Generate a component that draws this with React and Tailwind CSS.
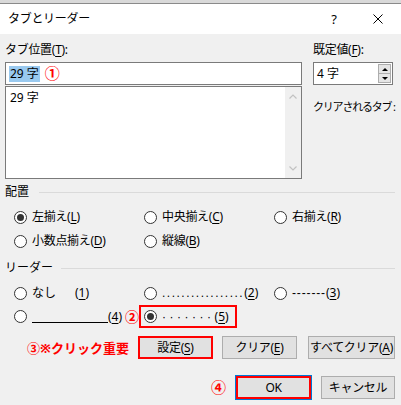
import { useState } from "react";

const font = "font-['Noto_Sans','Noto_Sans_CJK_JP',sans-serif]";

function Radio({ checked }) {
	return (
		<span className="flex h-[13px] w-[13px] shrink-0 items-center justify-center rounded-full border border-[#333] bg-white">
			{checked && <span className="h-[7px] w-[7px] rounded-full bg-[#333]" />}
		</span>
	);
}

function Key({ k }) {
	return (
		<>
			(<span className="underline underline-offset-2">{k}</span>)
		</>
	);
}

function Option({ label, k, checked }) {
	return (
		<div className="flex items-center gap-[5px]">
			<Radio checked={checked} />
			<span className="whitespace-nowrap tracking-[-0.3px]">
				{label}
				<Key k={k} />
			</span>
		</div>
	);
}

function Section({ title, lineStart }) {
	return (
		<div className="flex h-[16px] items-center pl-[5px] pr-[6px]">
			<span>{title}</span>
			<span className={`h-px flex-1 bg-[#dadada] ${lineStart}`} />
		</div>
	);
}

function Button({ children, className = "" }) {
	return (
		<button
			className={`flex h-[23px] items-center justify-center whitespace-nowrap border bg-[#e1e1e1] text-[12px] tracking-[-0.3px] ${className}`}
		>
			{children}
		</button>
	);
}

export default function App() {
	const [leader] = useState(5);

	return (
		<div
			className={`h-[405px] w-[401px] overflow-hidden bg-[#f0f0f0] text-[12px] leading-[16px] text-black ${font}`}
		>
			<div className="h-[4px] border-b border-[#8a8a8a] bg-[#d9d9d9]" />
			<div className="flex h-[30px] items-center bg-white pl-[8px]">
				<span className="flex-1 tracking-[-0.3px]">タブとリーダー</span>
				<span className="mr-[36px] text-[13px]">?</span>
				<svg viewBox="0 0 10 10" className="mr-[18px] h-[10px] w-[10px]" aria-hidden="true">
					<path d="M0.5 0.5L9.5 9.5M9.5 0.5L0.5 9.5" stroke="#000" strokeWidth="1" fill="none" />
				</svg>
			</div>

			<div className="flex pt-[8px]">
				<div className="ml-[5px] w-[297px]">
					<div className="tracking-[-0.3px]">
						タブ位置<Key k="T" />:
					</div>
					<div className="mt-[4px] flex h-[23px] items-center border border-[#7a7a7a] bg-white pl-[3px]">
						<span className="bg-[#99c9ef] px-[1px]">29 字</span>
						<span className="ml-[5px] text-[15px] font-bold leading-none text-[#f00]">①</span>
					</div>
					<div className="mt-[1px] flex h-[93px] border border-[#7a7a7a] bg-white">
						<div className="flex-1 pl-[4px] pt-[3px]">29 字</div>
						<div className="flex w-[16px] flex-col items-center justify-between bg-[#f0f0f0] py-[7px]">
							<svg viewBox="0 0 8 5" className="h-[5px] w-[8px]" aria-hidden="true">
								<path d="M0.5 4.5L4 1L7.5 4.5" stroke="#c2c2c2" strokeWidth="1.2" fill="none" />
							</svg>
							<svg viewBox="0 0 8 5" className="h-[5px] w-[8px]" aria-hidden="true">
								<path d="M0.5 0.5L4 4L7.5 0.5" stroke="#c2c2c2" strokeWidth="1.2" fill="none" />
							</svg>
						</div>
					</div>
				</div>

				<div className="ml-[11px] w-[80px]">
					<div className="tracking-[-0.3px]">
						既定値<Key k="F" />:
					</div>
					<div className="mt-[4px] flex h-[23px] items-center border border-[#7a7a7a] bg-white pl-[3px]">
						<span className="flex-1">4 字</span>
						<div className="mr-[1px] flex flex-col">
							<span className="flex h-[10px] w-[13px] items-center justify-center border border-[#adadad] bg-[#e5e5e5]">
								<span className="h-0 w-0 border-x-[3px] border-b-[3px] border-x-transparent border-b-black" />
							</span>
							<span className="-mt-px flex h-[10px] w-[13px] items-center justify-center border border-[#adadad] bg-[#e5e5e5]">
								<span className="h-0 w-0 border-x-[3px] border-t-[3px] border-x-transparent border-t-black" />
							</span>
						</div>
					</div>
					<div className="mt-[14px] whitespace-nowrap text-[11px] tracking-[-1.2px]">クリアされるタブ :</div>
				</div>
			</div>

			<div className="mt-[5px]">
				<Section title="配置" lineStart="ml-[10px]" />
			</div>
			<div className="mt-[9px] grid grid-cols-[130px_130px_auto] pl-[14px]">
				<Option label="左揃え" k="L" checked />
				<Option label="中央揃え" k="C" />
				<Option label="右揃え" k="R" />
			</div>
			<div className="mt-[8px] grid grid-cols-[130px_130px_auto] pl-[14px]">
				<Option label="小数点揃え" k="D" />
				<Option label="縦線" k="B" />
			</div>

			<div className="mt-[11px]">
				<Section title="リーダー" lineStart="ml-[8px]" />
			</div>
			<div className="mt-[9px] grid grid-cols-[130px_130px_auto] pl-[14px]">
				<div className="flex items-center gap-[5px]">
					<Radio checked={leader === 1} />
					<span className="w-[43px]">なし</span>
					<span className="-ml-[5px]">
						<Key k="1" />
					</span>
				</div>
				<div className="flex items-center gap-[5px]">
					<Radio checked={leader === 2} />
					<span className="whitespace-nowrap">
						<span className="font-['Liberation_Sans',sans-serif] tracking-[1.5px]">.................</span>
						<Key k="2" />
					</span>
				</div>
				<div className="flex items-center gap-[5px]">
					<Radio checked={leader === 3} />
					<span className="whitespace-nowrap">
						<span className="font-['Liberation_Sans',sans-serif] tracking-[0.85px]">-------</span>
						<Key k="3" />
					</span>
				</div>
			</div>
			<div className="mt-[4px] flex h-[23px] items-center pl-[14px]">
				<Radio checked={leader === 4} />
				<span className="ml-[5px] h-[12px] w-[76px] border-b border-black" />
				<Key k="4" />
				<span className="ml-[3px] text-[14px] font-bold leading-none text-[#f00]">②</span>
				<div className="flex h-[23px] w-[98px] items-center gap-[5px] border-2 border-[#f00] pl-[3px]">
					<Radio checked={leader === 5} />
					<span className="whitespace-nowrap">
						<span className="font-['Liberation_Sans',sans-serif] tracking-[3.5px]">·······</span>
						<Key k="5" />
					</span>
				</div>
			</div>

			<div className="mt-[8px] flex items-center">
				<span className="ml-[27px] w-[111px] whitespace-nowrap text-[13px] font-bold text-[#f00]">③※クリック重要</span>
				<Button className="w-[75px] border-2 border-[#f00]">
					設定<Key k="S" />
				</Button>
				<Button className="ml-[9px] w-[75px] border-[#adadad]">
					クリア<Key k="E" />
				</Button>
				<Button className="ml-[11px] w-[87px] border-[#adadad]">
					すべてクリア<Key k="A" />
				</Button>
			</div>

			<div className="mt-[17px] flex items-center">
				<span className="ml-[211px] w-[25px] text-[15px] font-bold leading-none text-[#f00]">④</span>
				<Button className="w-[75px] border-2 border-[#f00] outline outline-1 outline-[#0078d7]">OK</Button>
				<Button className="ml-[10px] w-[74px] border-[#adadad]">キャンセル</Button>
			</div>
		</div>
	);
}
